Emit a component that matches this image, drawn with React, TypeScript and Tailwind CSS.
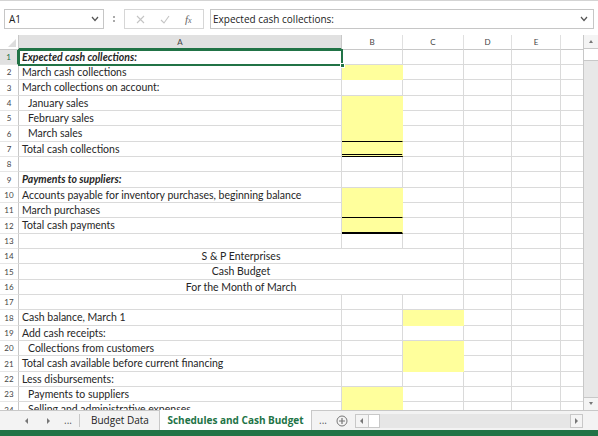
import React from 'react';

type Row = {
  a?: string;
  kind?: 'bi' | 'indent' | 'center';
  b?: boolean;
  c?: boolean;
  bLine?: 'single' | 'thick' | 'double';
  cLine?: boolean;
};

const rows: Row[] = [
  { a: 'Expected cash collections:', kind: 'bi' },
  { a: 'March cash collections', b: true },
  { a: 'March collections on account:' },
  { a: 'January sales', kind: 'indent', b: true },
  { a: 'February sales', kind: 'indent', b: true },
  { a: 'March sales', kind: 'indent', b: true, bLine: 'single' },
  { a: 'Total cash collections', b: true, bLine: 'double' },
  {},
  { a: 'Payments to suppliers:', kind: 'bi' },
  { a: 'Accounts payable for inventory purchases, beginning balance', b: true },
  { a: 'March purchases', b: true, bLine: 'single' },
  { a: 'Total cash payments', b: true, bLine: 'thick' },
  {},
  { a: 'S & P Enterprises', kind: 'center' },
  { a: 'Cash Budget', kind: 'center' },
  { a: 'For the Month of March', kind: 'center' },
  {},
  { a: 'Cash balance, March 1', c: true },
  { a: 'Add cash receipts:' },
  { a: 'Collections from customers', kind: 'indent', c: true, cLine: true },
  { a: 'Total cash available before current financing', c: true },
  { a: 'Less disbursements:' },
  { a: 'Payments to suppliers', kind: 'indent', b: true },
  { a: 'Selling and administrative expenses', kind: 'indent', b: true },
];

const grid = 'border-r border-b border-[#dadada]';

function Header() {
  return (
    <div className="flex h-[15px] shrink-0 text-[8px] text-[#444] bg-white">
      <div className="w-[19px] shrink-0 border-r border-b border-[#c8c8c8] flex items-end justify-end pr-[2px] pb-[2px]">
        <svg width="8" height="8" viewBox="0 0 8 8">
          <polygon points="8,0 8,8 0,8" fill="#dcdcdc" />
        </svg>
      </div>
      <div className="w-[323px] shrink-0 bg-[#e1e1e1] border-r border-[#c8c8c8] border-b-2 border-b-[#217346] flex items-center justify-center">A</div>
      <div className="w-[61px] shrink-0 border-r border-b border-[#e0e0e0] border-b-[#c8c8c8] flex items-center justify-center">B</div>
      <div className="w-[61px] shrink-0 border-r border-b border-[#e0e0e0] border-b-[#c8c8c8] flex items-center justify-center">C</div>
      <div className="w-[48px] shrink-0 border-r border-b border-[#e0e0e0] border-b-[#c8c8c8] flex items-center justify-center">D</div>
      <div className="w-[49px] shrink-0 border-r border-b border-[#e0e0e0] border-b-[#c8c8c8] flex items-center justify-center">E</div>
      <div className="flex-1 border-b border-[#c8c8c8]" />
    </div>
  );
}

function yellowCell(on?: boolean, line?: 'single' | 'thick' | 'double' | boolean) {
  let cls = 'w-[61px] shrink-0 border-r border-b ';
  if (on) cls += 'bg-[#ffff9c] border-r-[#ffff9c] border-b-[#ffff9c] ';
  else cls += 'border-[#dadada] ';
  if (line === 'single') cls += 'border-b-black ';
  if (line === 'thick') cls += 'border-b-2 border-b-black ';
  if (line === 'double') cls += 'border-b-[3px] border-double border-b-black ';
  if (line === true) cls += 'border-b-2 border-b-[#8c8c62] ';
  return cls;
}

function SheetRow({ r, n }: { r: Row; n: number }) {
  const h = n % 3 === 0 ? 'h-[16px]' : 'h-[15px]';
  const sel = n === 1;
  const text =
    r.kind === 'bi' ? 'font-bold italic pl-[3px]' : r.kind === 'indent' ? 'pl-[9px]' : 'pl-[3px]';
  return (
    <div className={`flex ${h} shrink-0 text-[10.5px] text-[#262626]`}>
      <div
        className={`w-[19px] shrink-0 flex items-center justify-center text-[8px] ${
          sel ? 'bg-[#e1e1e1] text-[#217346] border-r-2 border-[#217346]' : 'text-[#444] border-r border-[#c8c8c8]'
        } border-b border-b-[#e6e6e6]`}
      >
        {n}
      </div>
      {r.kind === 'center' ? (
        <div className={`w-[445px] shrink-0 ${grid} flex items-center justify-center pt-[1px]`}>{r.a}</div>
      ) : (
        <>
          <div className={`w-[323px] shrink-0 ${grid} flex items-center whitespace-nowrap pt-[1px] ${text}`}>{r.a}</div>
          <div className={yellowCell(r.b, r.bLine)} />
          <div className={yellowCell(r.c, r.cLine)} />
        </>
      )}
      <div className={`w-[48px] shrink-0 ${grid}`} />
      <div className={`w-[49px] shrink-0 ${grid}`} />
      <div className="flex-1 border-b border-[#dadada]" />
    </div>
  );
}

function Arrow({ dir }: { dir: 'up' | 'down' | 'left' | 'right' }) {
  const pts = {
    up: '1,4 3,1 5,4',
    down: '1,1 3,4 5,1',
    left: '4,0 1,3 4,6',
    right: '1,0 4,3 1,6',
  }[dir];
  return (
    <svg width="6" height="6" viewBox="0 0 6 6">
      <polygon points={pts} fill="#777" />
    </svg>
  );
}

export default function App() {
  return (
    <div className="w-[598px] h-[436px] overflow-hidden bg-white flex flex-col font-['Open_Sans',sans-serif] select-none">
      {/* formula bar */}
      <div className="h-[35px] shrink-0 border-t border-[#d4d4d4] flex items-start pt-[8px] pl-[4px] pr-[4px] gap-[6px] text-[10px] text-[#222]">
        <div className="w-[100px] h-[20px] border border-[#c6c6c6] flex items-center justify-between px-[4px]">
          <span>A1</span>
          <svg width="8" height="6" viewBox="0 0 8 6">
            <polyline points="1,1 4,4.5 7,1" fill="none" stroke="#555" strokeWidth="1.2" />
          </svg>
        </div>
        <div className="w-[8px] h-[20px] flex flex-col items-center justify-center gap-[2px]">
          <span className="w-[2px] h-[2px] bg-[#aaa]" />
          <span className="w-[2px] h-[2px] bg-[#aaa]" />
        </div>
        <div className="w-[80px] h-[20px] border border-[#d6d6d6] flex items-center justify-around px-[4px]">
          <svg width="9" height="9" viewBox="0 0 9 9">
            <path d="M1 1 L8 8 M8 1 L1 8" stroke="#c4c4c4" strokeWidth="1.1" />
          </svg>
          <svg width="10" height="9" viewBox="0 0 10 9">
            <polyline points="1,5 4,8 9,1" fill="none" stroke="#c4c4c4" strokeWidth="1.1" />
          </svg>
          <span className="italic font-['Liberation_Serif',serif] text-[11px] text-[#666]">
            f<span className="text-[8px]">x</span>
          </span>
        </div>
        <div className="flex-1 h-[20px] border border-[#c6c6c6] flex items-center justify-between pl-[2px] pr-[5px]">
          <span>Expected cash collections:</span>
          <svg width="8" height="6" viewBox="0 0 8 6">
            <polyline points="1,1 4,4.5 7,1" fill="none" stroke="#555" strokeWidth="1.2" />
          </svg>
        </div>
      </div>

      {/* sheet */}
      <div className="h-[376px] shrink-0 flex border-b border-[#c8c8c8]">
        <div className="w-[583px] shrink-0 flex flex-col overflow-hidden relative font-['Lato',sans-serif]">
          <Header />
          {rows.map((r, i) => (
            <SheetRow key={i} r={r} n={i + 1} />
          ))}
          {/* active cell */}
          <div className="absolute left-[18px] top-[14px] w-[325px] h-[17px] border-2 border-[#217346] pointer-events-none" />
          <div className="absolute left-[340px] top-[28px] w-[5px] h-[5px] bg-[#217346] border border-white" />
        </div>
        <div className="flex-1 flex flex-col bg-[#e8e8e8] border-l border-[#c8c8c8]">
          <div className="h-[14px] bg-[#f4f4f4] border-b border-[#c8c8c8] flex items-center justify-center">
            <Arrow dir="up" />
          </div>
          <div className="h-[12px] bg-white border-b border-[#c8c8c8]" />
          <div className="flex-1" />
          <div className="h-[13px] bg-[#f4f4f4] border-t border-[#c8c8c8] flex items-center justify-center">
            <Arrow dir="down" />
          </div>
        </div>
      </div>

      {/* tab bar */}
      <div className="h-[19px] shrink-0 bg-[#f3f3f3] flex items-stretch text-[10px] text-[#222] font-['Open_Sans',sans-serif]">
        <div className="w-[80px] flex items-center pl-[24px] gap-[16px] border-r border-[#c8c8c8] my-[3px]">
          <Arrow dir="left" />
          <Arrow dir="right" />
          <span className="text-[#555] -ml-[4px]">...</span>
        </div>
        <div className="w-[79px] pl-[11px] flex items-center">Budget Data</div>
        <div className="w-[153px] bg-white border-x border-[#c8c8c8] flex items-center justify-center font-bold text-[#217346] -mt-[1px]">
          Schedules and Cash Budget
        </div>
        <div className="w-[22px] flex items-center justify-center text-[#555]">...</div>
        <div className="w-[16px] flex items-center justify-center">
          <svg width="12" height="12" viewBox="0 0 12 12">
            <circle cx="6" cy="6" r="5" fill="none" stroke="#777" strokeWidth="1" />
            <path d="M6 3 V9 M3 6 H9" stroke="#777" strokeWidth="1.2" />
          </svg>
        </div>
        <div className="flex-1 flex items-center pl-[5px] pr-[15px]">
          <div className="flex-1 h-[14px] bg-[#e6e6e6] flex items-stretch">
            <div className="w-[14px] bg-[#f4f4f4] border border-[#c8c8c8] flex items-center justify-center">
              <Arrow dir="left" />
            </div>
            <div className="w-[11px] bg-white border-y border-r border-[#c8c8c8]" />
            <div className="flex-1" />
            <div className="w-[13px] bg-[#f4f4f4] border border-[#c8c8c8] flex items-center justify-center">
              <Arrow dir="right" />
            </div>
          </div>
        </div>
      </div>
      <div className="flex-1 bg-[#217346]" />
    </div>
  );
}
